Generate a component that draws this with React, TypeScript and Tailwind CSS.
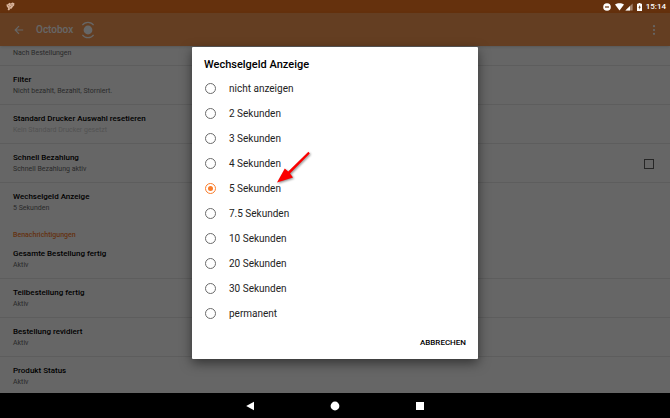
import { useState } from 'react'

type Setting = {
  title: string
  summary: string
  disabled?: boolean
  checkbox?: boolean
}

const GENERAL: Setting[] = [
  { title: 'Filter', summary: 'Nicht bezahlt, Bezahlt, Storniert.' },
  {
    title: 'Standard Drucker Auswahl resetieren',
    summary: 'Kein Standard Drucker gesetzt',
    disabled: true,
  },
  { title: 'Schnell Bezahlung', summary: 'Schnell Bezahlung aktiv', checkbox: true },
  { title: 'Wechselgeld Anzeige', summary: '5 Sekunden' },
]

const NOTIFICATIONS: Setting[] = [
  { title: 'Gesamte Bestellung fertig', summary: 'Aktiv' },
  { title: 'Teilbestellung fertig', summary: 'Aktiv' },
  { title: 'Bestellung revidiert', summary: 'Aktiv' },
  { title: 'Produkt Status', summary: 'Aktiv' },
]

const OPTIONS = [
  'nicht anzeigen',
  '2 Sekunden',
  '3 Sekunden',
  '4 Sekunden',
  '5 Sekunden',
  '7.5 Sekunden',
  '10 Sekunden',
  '20 Sekunden',
  '30 Sekunden',
  'permanent',
]

function StatusBar() {
  return (
    <div className="flex h-[13px] shrink-0 items-center justify-between bg-[#65310d] pr-1 pl-1.5 text-white">
      <svg width="9" height="9" viewBox="0 0 9 9" aria-hidden="true">
        <path
          d="M.4 2.6 2 2.2 3.2.8l1.6.6L6.4.4l2 .8-.2 2.2-1.4 1.4-1 1.8-1.6.4L3 8.4 1.6 7.8l.6-1.6L.8 4.6Z"
          fill="#d9b49b"
        />
        <path
          d="M2.2 3.6h1M4.6 2.4l1 .4M6.6 2.6l-.6 1M3.4 5l1.4-.6M3.6 6.2l.8.2"
          fill="none"
          stroke="#65310d"
          strokeWidth=".5"
        />
      </svg>
      <div className="flex items-center">
        <svg width="8" height="8" viewBox="0 0 8 8" aria-hidden="true">
          <circle cx="4" cy="4" r="3.8" fill="currentColor" />
          <path d="M2 4h4" stroke="#65310d" strokeWidth="1.2" />
        </svg>
        <svg className="ml-1" width="9" height="8" viewBox="0 0 9 8" aria-hidden="true">
          <path d="M0 1.6C2.6-.3 6.4-.3 9 1.6L4.5 7.6Z" fill="currentColor" />
        </svg>
        <svg className="ml-px" width="8" height="8" viewBox="0 0 8 8" aria-hidden="true">
          <path d="M7.6.4v7.2H.4Z" fill="currentColor" opacity=".4" />
          <path d="M5 3v4.6H.4Z" fill="currentColor" />
        </svg>
        <svg className="ml-1" width="5" height="8" viewBox="0 0 5 8" aria-hidden="true">
          <path d="M1.5 0h2v.8H5V8H0V.8h1.5Z" fill="currentColor" />
          <path d="M2.9 2 1.4 4.7h1v2l1.4-2.9h-.9Z" fill="#65310d" />
        </svg>
        <span className="ml-1 text-[8px] leading-3 font-medium">15:14</span>
      </div>
    </div>
  )
}

function AppBar() {
  return (
    <header className="flex h-[33px] shrink-0 items-center bg-[#fa9b55] px-3 text-white shadow-sm">
      <button type="button" aria-label="Zurück" className="ml-0.5">
        <svg width="10" height="10" viewBox="0 0 10 10" fill="none" stroke="currentColor" strokeWidth="1.2">
          <path d="M9.2 5H1.4M5 1.2 1.2 5 5 8.8" />
        </svg>
      </button>
      <h1 className="ml-3 text-[10px] leading-4 font-medium">Octobox</h1>
      <svg className="ml-2" width="14" height="18" viewBox="0 0 14 18" aria-hidden="true">
        <circle cx="7" cy="9" r="4.4" fill="currentColor" />
        <path
          d="M1.4 4.2C4 .4 10 .4 12.6 4.2M1.4 13.8c2.6 3.8 8.6 3.8 11.2 0"
          fill="none"
          stroke="currentColor"
          strokeWidth="1.2"
        />
      </svg>
      <button type="button" aria-label="Mehr" className="ml-auto">
        <svg width="8" height="10" viewBox="0 0 8 10" fill="currentColor">
          <circle cx="4" cy="1.2" r="1.1" />
          <circle cx="4" cy="5" r="1.1" />
          <circle cx="4" cy="8.8" r="1.1" />
        </svg>
      </button>
    </header>
  )
}

function SettingRow({ title, summary, disabled, checkbox }: Setting) {
  const text = (
    <span className="flex flex-col">
      <span className="text-[8px] leading-3 font-medium text-black">{title}</span>
      <span className={`text-[7px] leading-[11px] ${disabled ? 'text-[#cfcfcf]' : 'text-[#6b6b6b]'}`}>
        {summary}
      </span>
    </span>
  )

  return (
    <li className="h-[39px] border-t border-[#e8e8e8] px-[13px] pt-2">
      {checkbox ? (
        <label className="flex items-center justify-between">
          {text}
          <input
            type="checkbox"
            className="mr-[3px] h-[10px] w-[10px] appearance-none border border-[#5f5f5f]"
          />
        </label>
      ) : (
        text
      )}
    </li>
  )
}

function ArrowMark() {
  return (
    <svg
      className="pointer-events-none absolute top-[103px] left-[83px] drop-shadow-[1px_1px_1px_rgba(0,0,0,0.45)]"
      width="38"
      height="36"
      viewBox="0 0 38 36"
      aria-hidden="true"
    >
      <path d="M33.4 1.8 34.8 3.4 15 23.4 18 27.4 2 32.4 9.8 18.4 13.2 21.6Z" fill="#fb0000" />
    </svg>
  )
}

function ChangeDialog() {
  const [selected, setSelected] = useState('5 Sekunden')

  return (
    <div
      role="dialog"
      aria-labelledby="dialog-title"
      className="relative w-[286px] rounded-[1px] bg-white shadow-[0_4px_12px_rgba(0,0,0,0.5)]"
    >
      <h2 id="dialog-title" className="px-3 pt-2.5 pb-[3px] text-[11px] leading-4 font-medium text-black">
        Wechselgeld Anzeige
      </h2>
      <div role="radiogroup" aria-labelledby="dialog-title">
        {OPTIONS.map((option) => (
          <label key={option} className="flex h-[25px] items-center px-[13px] text-[10px] text-[#222]">
            <input
              type="radio"
              name="change"
              checked={selected === option}
              onChange={() => setSelected(option)}
              className="mr-[13px] h-[11px] w-[11px] appearance-none rounded-full border border-[#6b6b6b] bg-clip-content p-[2px] checked:border-[#fa7d2b] checked:bg-[#fa7d2b]"
            />
            {option}
          </label>
        ))}
      </div>
      <div className="flex justify-end px-3 pt-2.5 pb-[9px]">
        <button type="button" className="text-[8px] leading-[14px] font-medium text-black">
          ABBRECHEN
        </button>
      </div>
      <ArrowMark />
    </div>
  )
}

function NavBar() {
  return (
    <nav className="flex h-[25px] shrink-0 items-center justify-center gap-[75px] bg-black text-white">
      <button type="button" aria-label="Zurück">
        <svg width="10" height="10" viewBox="0 0 10 10" fill="currentColor">
          <path d="M9 .8v8.4L1.2 5Z" />
        </svg>
      </button>
      <button type="button" aria-label="Startseite">
        <svg width="10" height="10" viewBox="0 0 10 10" fill="currentColor">
          <circle cx="5" cy="5" r="4.4" />
        </svg>
      </button>
      <button type="button" aria-label="Übersicht">
        <svg width="10" height="10" viewBox="0 0 10 10" fill="currentColor">
          <path d="M1 1h8v8H1Z" />
        </svg>
      </button>
    </nav>
  )
}

export default function App() {
  return (
    <div className="flex h-screen flex-col overflow-hidden bg-white font-[Roboto,sans-serif]">
      <StatusBar />
      <div className="relative flex min-h-0 flex-1 flex-col">
        <AppBar />
        <main className="min-h-0 flex-1 overflow-hidden">
          <p className="h-[19px] px-[13px] pt-0.5 text-[7px] leading-[11px] text-[#6b6b6b]">Nach Bestellungen</p>
          <ul>
            {GENERAL.map((item) => (
              <SettingRow key={item.title} {...item} />
            ))}
          </ul>
          <h2 className="h-[18px] px-[13px] pt-2 text-[7px] leading-3 font-medium text-[#fa7d2b]">
            Benachrichtigungen
          </h2>
          <ul className="[&>li:first-child]:border-transparent">
            {NOTIFICATIONS.map((item) => (
              <SettingRow key={item.title} {...item} />
            ))}
          </ul>
        </main>
        <div className="absolute inset-0 flex items-center justify-center bg-black/60">
          <ChangeDialog />
        </div>
      </div>
      <NavBar />
    </div>
  )
}
